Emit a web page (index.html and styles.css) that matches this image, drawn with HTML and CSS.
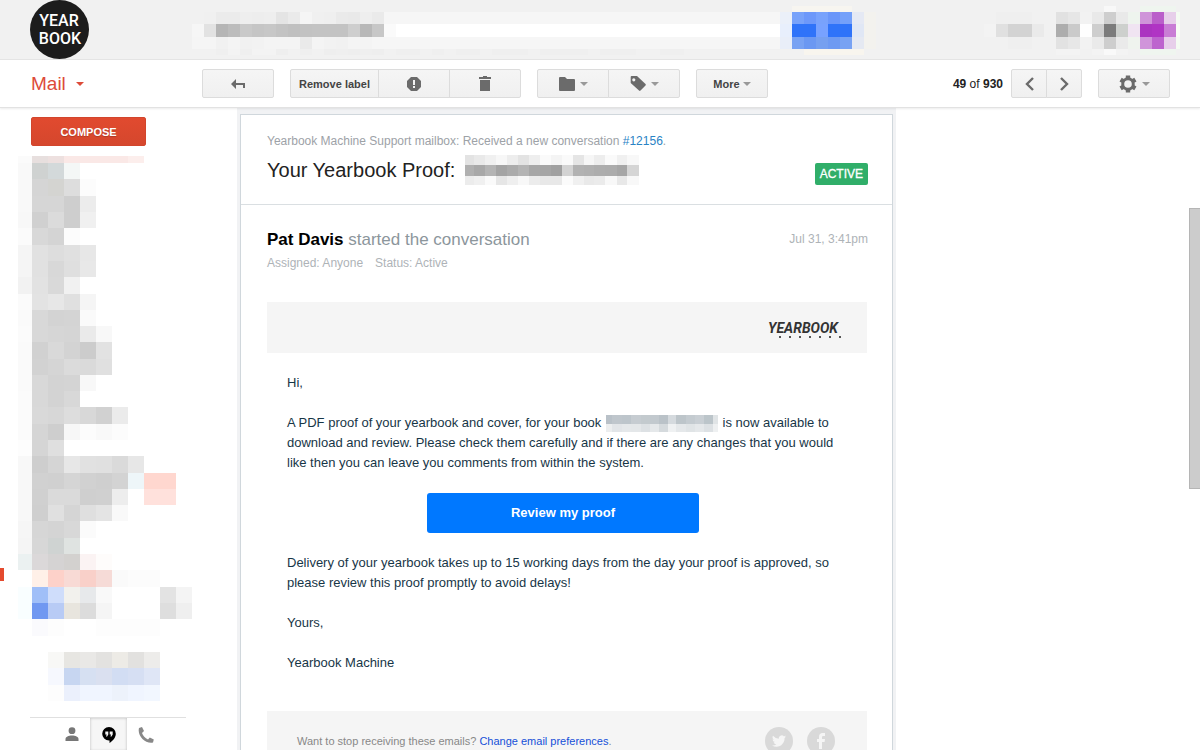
FILE: index.html
```html
<!DOCTYPE html>
<html lang="en">
<head>
  <meta charset="UTF-8">
  <meta name="viewport" content="width=device-width, initial-scale=1.0">
  <title>Mail</title>
  <link rel="stylesheet" href="styles.css">
</head>
<body>
  <header class="topbar">
    <svg class="brand" width="60" height="60" viewBox="0 0 60 60">
      <circle cx="29.5" cy="29.5" r="29.5" fill="#1c1c1c"/>
      <text x="29" y="26" text-anchor="middle">YEAR</text>
      <text x="30" y="44" text-anchor="middle">BOOK</text>
    </svg>
    <svg class="mosaic search" data-mosaic="search"></svg>
    <svg class="mosaic account" data-mosaic="account"></svg>
  </header>

  <nav class="toolbar">
    <button class="mail-menu" type="button">Mail <span class="caret caret-red"></span></button>

    <div class="group">
      <button class="btn" type="button" aria-label="Back">
        <svg width="14" height="10" viewBox="0 0 14 10"><path d="M0 5l5-5v4h9v5h-2V6H5v4z" fill="#6b6b6b"/></svg>
      </button>
    </div>
    <div class="group">
      <button class="btn btn-label" type="button">Remove label</button>
      <button class="btn" type="button" aria-label="Report spam">
        <svg width="14" height="14" viewBox="0 0 14 14"><path d="M4 0h6l4 4v6l-4 4H4l-4-4V4z" fill="#6b6b6b"/><path d="M6 3h2v5H6zM6 9h2v2H6z" fill="#f3f3f3"/></svg>
      </button>
      <button class="btn" type="button" aria-label="Delete">
        <svg width="12" height="15" viewBox="0 0 12 15"><path d="M4 0h4v1h4v2H0V1h4zM1 4h10v11H1z" fill="#6b6b6b"/></svg>
      </button>
    </div>
    <div class="group">
      <button class="btn" type="button" aria-label="Move to">
        <svg width="16" height="14" viewBox="0 0 16 14"><path d="M1 0h5l2 2h7a1 1 0 0 1 1 1v10a1 1 0 0 1-1 1H1a1 1 0 0 1-1-1V1a1 1 0 0 1 1-1z" fill="#6b6b6b"/></svg>
        <span class="caret"></span>
      </button>
      <button class="btn" type="button" aria-label="Labels">
        <svg width="16" height="16" viewBox="0 0 16 16"><path d="M1.500 0h5.500l8.500 8c.5.500.5 1 0 1.500l-5 5c-.5.500-1 .5-1.500 0L.7 7V1c0-.6.300-1 .8-1zM3.800 2.200a1.600 1.600 0 1 0 .01 3.200A1.600 1.600 0 0 0 3.800 2.200z" fill="#6b6b6b" fill-rule="evenodd"/></svg>
        <span class="caret"></span>
      </button>
    </div>
    <div class="group">
      <button class="btn btn-more" type="button">More <span class="caret"></span></button>
    </div>

    <p class="count"><b>49</b> of <b>930</b></p>
    <div class="group">
      <button class="btn btn-page" type="button" aria-label="Newer">
        <svg width="9" height="14" viewBox="0 0 9 14"><path d="M8 1L2 7l6 6" fill="none" stroke="#6b6b6b" stroke-width="2.400"/></svg>
      </button>
      <button class="btn btn-page" type="button" aria-label="Older">
        <svg width="9" height="14" viewBox="0 0 9 14"><path d="M1 1l6 6-6 6" fill="none" stroke="#6b6b6b" stroke-width="2.400"/></svg>
      </button>
    </div>
    <div class="group">
      <button class="btn" type="button" aria-label="Settings">
        <svg width="18" height="18" viewBox="0 0 18 18"><circle cx="9" cy="9" r="5.300" fill="none" stroke="#6b6b6b" stroke-width="3"/><path d="M9 .5v3M9 14.500v3M1.600 4.700l2.600 1.500M13.800 11.800l2.600 1.500M1.600 13.300l2.600-1.500M13.800 6.200l2.600-1.500" stroke="#6b6b6b" stroke-width="4.400"/></svg>
        <span class="caret"></span>
      </button>
    </div>
  </nav>

  <div class="page">
    <aside class="sidebar">
      <button class="compose" type="button">COMPOSE</button>
      <svg class="mosaic labels" data-mosaic="labels"></svg>
      <div class="chat-tabs">
        <button class="chat-tab" type="button" aria-label="Contacts">
          <svg width="14" height="15" viewBox="0 0 14 15"><circle cx="7" cy="3.700" r="3.400" fill="#777"/><path d="M.5 14v-2c0-2 3-3.500 6.500-3.500s6.500 1.500 6.500 3.500v2z" fill="#777"/></svg>
        </button>
        <button class="chat-tab selected" type="button" aria-label="Hangouts">
          <svg width="14" height="16" viewBox="0 0 14 16"><path d="M7 0a6.800 6.800 0 0 1 6.800 6.800c0 4-3.300 7.400-6.300 9.200v-2.400H7A6.800 6.800 0 0 1 7 0z" fill="#000"/><path d="M3.300 4.500h3v3L5.100 9.500H4l.7-2H3.300zM7.700 4.500h3v3L9.500 9.500H8.400l.7-2H7.700z" fill="#f5f5f5"/></svg>
        </button>
        <button class="chat-tab" type="button" aria-label="Phone">
          <svg width="16" height="16" viewBox="0 0 16 16"><path d="M1 1l3-1 2 4-2 2c1 3 3 5 6 6.500l1.800-2 4 2-.8 3C7 17-1 8.500 1 1z" fill="#888"/></svg>
        </button>
      </div>
      <span class="marker"></span>
    </aside>

    <main class="reader">
      <article class="card">
        <header class="card-head">
          <p class="mailbox">Yearbook Machine Support mailbox: Received a new conversation <a href="#">#12156</a>.</p>
          <div class="title-row">
            <h1>Your Yearbook Proof: <svg class="mosaic" data-mosaic="title"></svg></h1>
            <span class="status">ACTIVE</span>
          </div>
        </header>

        <section class="thread">
          <div class="thread-row">
            <h2><b>Pat Davis</b> started the conversation</h2>
            <time>Jul 31, 3:41pm</time>
          </div>
          <p class="meta"><span>Assigned: Anyone</span><span>Status: Active</span></p>

          <div class="banner">
            <svg width="76" height="24" viewBox="0 0 76 24">
              <text class="wordmark" x="37" y="17" text-anchor="middle">YEARBOOK</text>
              <path d="M13 21h62" stroke="#555" stroke-width="2" stroke-dasharray="2 8"/>
            </svg>
          </div>

          <div class="message">
            <p>Hi,</p>
            <p>A PDF proof of your yearbook and cover, for your book <svg class="mosaic book" data-mosaic="book"></svg> is now available to download and review. Please check them carefully and if there are any changes that you would like then you can leave you comments from within the system.</p>
            <a class="review" href="#">Review my proof</a>
            <p>Delivery of your yearbook takes up to 15 working days from the day your proof is approved, so please review this proof promptly to avoid delays!</p>
            <p>Yours,</p>
            <p>Yearbook Machine</p>
          </div>

          <footer class="mail-foot">
            <p>Want to stop receiving these emails? <a href="#">Change email preferences</a>.</p>
            <a class="social" href="#" aria-label="Twitter">
              <svg width="14" height="12" viewBox="0 0 24 20"><path d="M24 2.400a10 10 0 0 1-2.800.8A5 5 0 0 0 23.300.5a10 10 0 0 1-3.100 1.200 5 5 0 0 0-8.400 4.500A14 14 0 0 1 1.700 1a5 5 0 0 0 1.500 6.600 5 5 0 0 1-2.200-.6 5 5 0 0 0 4 4.900 5 5 0 0 1-2.300.1 5 5 0 0 0 4.700 3.400A10 10 0 0 1 0 17.500a14 14 0 0 0 7.500 2.200c9.100 0 14.300-7.700 14-14.600A10 10 0 0 0 24 2.400z" fill="#f5f5f5"/></svg>
            </a>
            <a class="social" href="#" aria-label="Facebook">
              <svg width="8" height="16" viewBox="0 0 8 16"><path d="M2 16V9H0V6h2V4c0-3 1.500-4 3.500-4H8v3H6.500C5.500 3 5 3.300 5 4.300V6h3l-.4 3H5v7z" fill="#f5f5f5"/></svg>
            </a>
          </footer>
        </section>
      </article>
    </main>
    <span class="scroll-thumb"></span>
  </div>

  <script src="mosaic.js"></script>
</body>
</html>
```

FILE: styles.css
```css
* {
  box-sizing: border-box;
}

body {
  display: flex;
  flex-direction: column;
  height: 100vh;
  margin: 0;
  overflow: hidden;
  background: #fff;
  color: #222;
  font-family: "Liberation Sans", Arial, sans-serif;
  font-size: 13px;
}

h1, h2, p {
  margin: 0;
  font-weight: normal;
}

button {
  font-family: inherit;
  cursor: pointer;
}

a {
  text-decoration: none;
}

svg {
  display: block;
  flex: none;
}

.mosaic {
  shape-rendering: crispEdges;
}

/* top bar */
.topbar {
  display: flex;
  flex: none;
  height: 60px;
  padding: 0 20px 0 30px;
  background: #f1f1f1;
  border-bottom: 1px solid #e5e5e5;
}

.brand text {
  fill: #fff;
  font-family: Roboto, sans-serif;
  font-size: 16px;
  font-weight: 500;
}

.search {
  margin: 6px 0 0 102px;
}

.account {
  margin: 6px 0 0 auto;
}

/* toolbar */
.toolbar {
  display: flex;
  flex: none;
  align-items: center;
  gap: 16px;
  height: 48px;
  padding: 0 30px 0 31px;
  border-bottom: 1px solid #e2e2e2;
  box-shadow: 0 1px 2px rgba(0, 0, 0, 0.08);
  z-index: 1;
}

.mail-menu {
  display: flex;
  align-items: center;
  gap: 10px;
  width: 155px;
  padding: 0;
  border: 0;
  background: none;
  color: #dd4b39;
  font-size: 19px;
}

.caret {
  border: 4px solid transparent;
  border-top-color: #999;
  border-bottom: 0;
}

.caret-red {
  border-top-color: #dd4b39;
}

.group {
  display: flex;
}

.btn {
  display: flex;
  align-items: center;
  justify-content: center;
  gap: 5px;
  width: 72px;
  height: 29px;
  padding: 0;
  border: 1px solid #dcdcdc;
  background: linear-gradient(#f5f5f5, #f0f0f0);
  color: #444;
  font-size: 11px;
  font-weight: bold;
}

.btn + .btn {
  margin-left: -1px;
}

.btn:first-child {
  border-radius: 2px 0 0 2px;
}

.btn:last-child {
  border-radius: 0 2px 2px 0;
}

.btn:only-child {
  border-radius: 2px;
}

.btn-label {
  width: 89px;
}

.btn-more {
  gap: 3px;
}

.btn-page {
  width: 36px;
}

.count {
  margin: 0 -8px 0 auto;
  font-size: 12px;
}

/* page */
.page {
  position: relative;
  display: flex;
  flex: 1;
  min-height: 0;
}

.sidebar {
  position: relative;
  flex: none;
  width: 237px;
  padding-top: 9px;
}

.compose {
  display: block;
  width: 115px;
  height: 29px;
  margin-left: 31px;
  border: 1px solid #d2452c;
  border-radius: 2px;
  background: linear-gradient(#e14a2f, #d5472d);
  color: #fff;
  font-size: 11px;
  font-weight: bold;
  text-shadow: 0 1px 1px rgba(0, 0, 0, 0.2);
}

.labels {
  margin: 10px 0 0 18px;
}

.marker {
  position: absolute;
  top: 460px;
  left: 0;
  width: 4px;
  height: 13px;
  background: #e44a2e;
}

.chat-tabs {
  display: flex;
  width: 156px;
  margin: 16px 0 0 30px;
  padding-left: 23px;
  border-top: 1px solid #e0e0e0;
}

.chat-tab {
  display: flex;
  align-items: center;
  justify-content: center;
  width: 37px;
  height: 33px;
  padding: 0;
  border: 0;
  background: none;
}

.chat-tab.selected {
  background: #f6f6f6;
  box-shadow: inset 0 0 3px rgba(0, 0, 0, 0.25);
}

.scroll-thumb {
  position: absolute;
  top: 100px;
  right: 0;
  width: 11px;
  height: 281px;
  border: 1px solid #b5b5b5;
  border-right: 0;
  background: #ccc;
}

/* mail */
.reader {
  flex: none;
  width: 659px;
  padding: 6px 3px 0;
  overflow: hidden;
  background: #f1f2f4;
}

.card {
  border: 1px solid #d0d7dc;
  background: #fff;
}

.card-head {
  padding: 18px 24px 19px 26px;
  border-bottom: 1px solid #dadfe2;
}

.mailbox {
  color: #9da2a7;
  font-size: 12px;
  line-height: 16px;
}

.mailbox a {
  color: #2a83c5;
}

.title-row,
.thread-row {
  display: flex;
  justify-content: space-between;
}

.title-row {
  align-items: flex-end;
  padding-top: 6px;
}

h1 {
  display: flex;
  align-items: center;
  gap: 10px;
  font-size: 20px;
  line-height: 28px;
}

.status {
  height: 22px;
  padding: 0 5px;
  border-radius: 2px;
  background: #30ae69;
  color: #fff;
  font-size: 12px;
  line-height: 22px;
  -webkit-text-stroke: 0.3px #fff;
}

.thread {
  padding: 25px 24px 0 26px;
}

h2 {
  color: #8c969c;
  font-size: 17px;
  line-height: 20px;
}

h2 b {
  color: #000;
}

time {
  color: #aeb3b7;
  font-size: 12px;
  line-height: 18px;
}

.meta {
  display: flex;
  gap: 12px;
  padding-top: 5px;
  color: #aeb3b7;
  font-size: 12px;
  line-height: 16px;
}

.banner {
  display: flex;
  align-items: center;
  justify-content: flex-end;
  height: 51px;
  margin: 31px 1px 0 0;
  padding-right: 25px;
  background: #f5f5f5;
}

.wordmark {
  fill: #333;
  font-family: Roboto, sans-serif;
  font-size: 14px;
  font-style: italic;
  font-weight: bold;
}

.message {
  padding: 20px 29px 18px 20px;
  color: #173647;
  line-height: 20px;
}

.message p {
  margin-bottom: 20px;
}

.book {
  display: inline-block;
  margin: 0 1px;
  vertical-align: -5px;
}

.review {
  display: block;
  width: 272px;
  margin: 0 auto 20px;
  border-radius: 3px;
  background: #0078ff;
  color: #fff;
  font-size: 13px;
  font-weight: bold;
  line-height: 40px;
  text-align: center;
}

.mail-foot {
  display: flex;
  align-items: center;
  gap: 14px;
  margin-right: 1px;
  padding: 16px 32px 40px 30px;
  background: #f5f5f5;
  color: #888;
  font-size: 11px;
}

.mail-foot p {
  flex: 1;
}

.mail-foot p a {
  color: #1550d8;
}

.social {
  display: flex;
  align-items: center;
  justify-content: center;
  width: 28px;
  height: 28px;
  border-radius: 50%;
  background: #d9d9d9;
}
```

FILE: mosaic.js
```js
// Cells are "ee" (grey) or "aabbcc", "--" leaves a gap, "x*n" repeats.
function steps(start, size, count) {
  return Array.from({ length: count + 1 }, (_, i) => start + i * size);
}

const mosaics = {
  search: {
    x: steps(0, 12, 58),
    y: [0, 6, 18, 31, 43, 49],
    rows: [
      '--*50 f7f5f0*5 --*3',
      '-- f0 eb eb ee ed ee e4 ea f5 f0 ef ea e9 ee ea f6 f6*32 ebf0f9 78a2fa 6d98fa 78a2fc 6a96fa 74a0fa e5e9f4 f3f2ee',
      'f6 e2 b5 bc c9 c5 c7 c3 c0 c2 c3 c3 c3 ce b8 c7 fa ff*32 e8effc 2f73f9*2 78a2ff 2f73f9*2 e0e7f5 f3f2ee',
      'f5 f5 f1 f4 f1 f2 f4*3 ea f4 f2 f1 f4 f4 f6 f6 f6*32 e9eef8 78a2f3 6b98f2 76a0f0 6e9af2 78a2f3 e5e9f2 f3f2ee',
      '--*2 ef f3 ef f3 f3 ee -- ef -- ee ef ee ef ee -- ef*2 -- ef -- ef*2 -- ef*3 -- ef*4 -- ef*3 --*2 ef ef --*10 f8f5ee*5'
    ]
  },
  account: {
    x: steps(0, 12, 16).concat(196),
    y: [0, 6, 18, 31, 43, 49],
    rows: [
      '--*10 f8 --*2 eff5ef*3',
      '-- ef*2 ef -- -- e1 e6 f2 e9 ce e9 eef4ee cf94d9 ba5eca e7cfea f4fbf2',
      'f3 e0 d3 d3 ea -- ad ca fe ce 7c cdd0cd f0e4f2 ab34c0 b034c4 c97ed5 f8fdf5',
      '--*2 ef ef -- -- e2 e7 f2 ea ce ea eff3ee d094da bd64ce e7cfea f4fbf2',
      '--*6 f3*2 -- f3 f9 f3 -- eff5ef*3'
    ]
  },
  labels: {
    x: [0, 14, 30, 46, 62, 78, 94, 110, 126, 142, 158, 174],
    y: [0, 7, 23, 40, 56, 72, 89, 105, 121, 138, 154, 170, 186, 203, 219, 235, 251, 268, 284, 300, 317, 333, 349, 365, 382, 398, 414, 431, 447, 463, 480, 496, 512, 529, 545],
    rows: [
      'fb e7dfde ede0df fae8e6*4 fceeec',
      'f9 cfd2d1 d3d9da f4f7f6',
      'f9 d5 d4d4d1 dd fc',
      'f9 d6 d6 ce ec',
      'f8 d0 db ce f0',
      'fb d8 d4 fc',
      'f5 e1 dd e0 e7',
      'f5 e1 d8 df e8',
      'f2 e2 d9 f1',
      'fb e3 e7 e0 f5',
      'fa d8 d3 d4 fa',
      'fb d8 d6 d5 ea f8',
      'fa d1 d9 d3 cc e2',
      'fa d2 d5 db da e0',
      'fa d8 d3 d4 f8',
      'fb d8 d3 d8',
      'fb d9 d7 dd d8 d1 eb',
      'fb d5 ce f7 fc f9 fc',
      'fd d5 df',
      'f8 ce d5 e7 e1 e0 da e7',
      'f8 d1 d0 d5 d1 cf d3 eef6f9 ffd7cf*2',
      'f8 d0 da da cf d0 ed -- ffe1dc*2',
      'f8 cf e0 d5 df e4 f9',
      'f6 d6 d4 d8 fb',
      'f5 d7 cfd3d2 dfe3e1',
      'ebf1f1 dbd8d9 d5d3d3 d3d1cf fbf3f3 fefcfb',
      '-- fff0e8 fdd1c9 f8dad5 f9d0c9 f6dbd7 fa fc fc',
      'f9feff a0bff8 cfddfb f2f1ed e7e9eb f9 --*3 e3 f4',
      'f9feff 7098f1 b8cbf5 e8e5de dc f5 --*3 de ef',
      '-- fafafd fd -- -- fd*4',
      '',
      '-- -- f8f8f6 e7e6e2 e9e8e6 e3e2e0 edebe6 e2e1df edecea',
      '-- -- f6f8fe c7d6f1 d6e0f2 dae0f0 d2ddf3 d6dff3 dfe6f6',
      '-- -- fd ebf0fc f0f5ff*2 edf2fb f0f5ff f2f7ff'
    ]
  },
  title: {
    x: [0, 9, 20, 31, 42, 53, 64, 75, 86, 97, 108, 119, 129, 140, 152, 162, 174],
    y: [0, 10, 21, 30],
    rows: [
      'e3 e9 f0 f7 ed e3 ee fa f4 fa e5 f6 ed fa f0 f8',
      'b0 a8 b4 a4 ab b4 a7 a5 a0 d3 b2 b0 ad ac a6 d5',
      'ec f0 fa e6 ef f8 ec e8 e8 fb f0 e9 eb f8 e8 f8'
    ]
  },
  book: {
    x: [0, 6, 16, 25, 35, 44, 53, 62, 70, 80, 89, 98, 107, 112],
    y: [0, 9, 17],
    rows: [
      'b9c1c8 bfc6cc bdc5cb c6ccd1 c3cace c2c9ce bac2c8 d5dade bdc5ca c4cbd0 c9cfd4 bcc5ca e0e4e6',
      'eceeef e2e5e8 e5e8ea e4e7e9 dde1e4 e5e8ea d5dadd eff1f2 e5e8ea e0e4e6 e5e8ea dde1e4 eef0f1'
    ]
  }
};

document.querySelectorAll('[data-mosaic]').forEach((svg) => {
  const { x, y, rows } = mosaics[svg.dataset.mosaic];
  svg.setAttribute('width', x[x.length - 1]);
  svg.setAttribute('height', y[y.length - 1]);

  rows.forEach((row, r) => {
    let c = 0;
    row.split(' ').filter(Boolean).forEach((token) => {
      const [color, times] = token.split('*');
      for (let n = 0; n < Number(times || 1); n++, c++) {
        if (color === '--') continue;
        const rect = document.createElementNS('http://www.w3.org/2000/svg', 'rect');
        rect.setAttribute('x', x[c]);
        rect.setAttribute('y', y[r]);
        rect.setAttribute('width', x[c + 1] - x[c]);
        rect.setAttribute('height', y[r + 1] - y[r]);
        rect.setAttribute('fill', '#' + (color.length === 2 ? color.repeat(3) : color));
        svg.appendChild(rect);
      }
    });
  });
});
```
